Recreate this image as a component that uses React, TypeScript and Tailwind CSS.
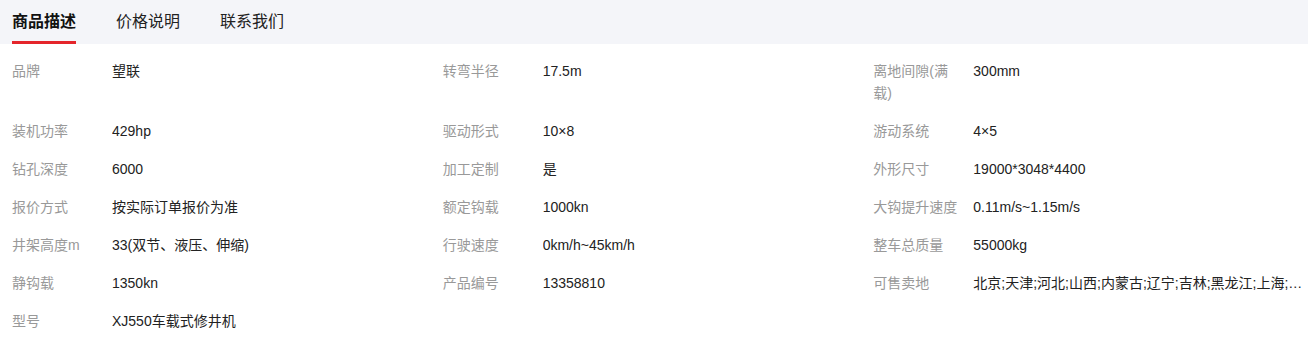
const tabs = ['商品描述', '价格说明', '联系我们'];

const specs: [string, string][] = [
  ['品牌', '望联'],
  ['转弯半径', '17.5m'],
  ['离地间隙(满载)', '300mm'],
  ['装机功率', '429hp'],
  ['驱动形式', '10×8'],
  ['游动系统', '4×5'],
  ['钻孔深度', '6000'],
  ['加工定制', '是'],
  ['外形尺寸', '19000*3048*4400'],
  ['报价方式', '按实际订单报价为准'],
  ['额定钩载', '1000kn'],
  ['大钩提升速度', '0.11m/s~1.15m/s'],
  ['井架高度m', '33(双节、液压、伸缩)'],
  ['行驶速度', '0km/h~45km/h'],
  ['整车总质量', '55000kg'],
  ['静钩载', '1350kn'],
  ['产品编号', '13358810'],
  ['可售卖地', '北京;天津;河北;山西;内蒙古;辽宁;吉林;黑龙江;上海;江苏;浙江;安徽;福建;江西;山东;河南;湖北;湖南;广东;广西;海南;重庆;四川;贵州;云南;西藏;陕西;甘肃;青海;宁夏;新疆'],
  ['型号', 'XJ550车载式修井机'],
];

export default function App() {
  return (
    <div className="w-[1308px] h-[340px] bg-white font-['Liberation_Sans','Noto_Sans_CJK_SC',sans-serif] overflow-hidden">
      {/* Tabs */}
      <div className="h-[44px] bg-[#f4f5f9] flex pl-3 gap-10">
        {tabs.map((t, i) => (
          <div key={t} className="relative h-full flex items-center">
            <span className={`text-[16px] leading-none ${i === 0 ? 'font-bold text-[#111]' : 'text-[#222]'}`}>{t}</span>
            {i === 0 && <div className="absolute left-0 right-0 bottom-0 h-[3px] bg-[#e4252b]" />}
          </div>
        ))}
      </div>

      {/* Spec grid */}
      <div className="grid grid-cols-3 gap-y-4 pt-4 pl-3 pr-[4px]">
        {specs.map(([k, v]) => (
          <div key={k} className="flex text-[14px] leading-[22px] min-w-0">
            <div className="w-[86px] mr-[14px] shrink-0 text-[#999]">{k}</div>
            <div className="flex-1 min-w-0 truncate text-[#222]">{v}</div>
          </div>
        ))}
      </div>
    </div>
  );
}
